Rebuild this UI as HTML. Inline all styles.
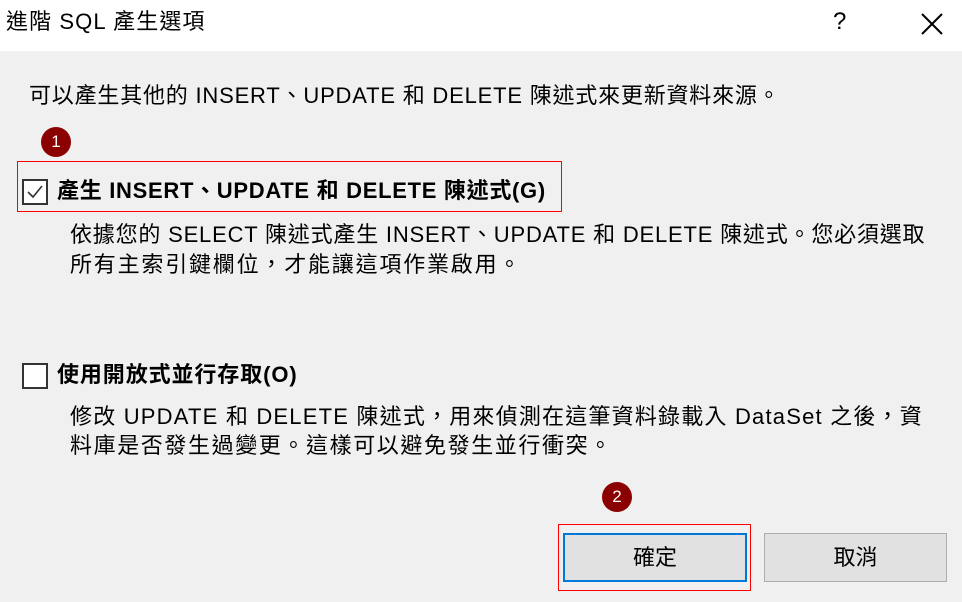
<!DOCTYPE html>
<html><head><meta charset="utf-8"><style>
body{margin:0;width:962px;height:602px;background:#f0f0f0;position:relative;overflow:hidden;font-family:"Liberation Sans","Noto Sans CJK TC",sans-serif;color:#000;font-size:22px}
.t{position:absolute;white-space:nowrap;line-height:30px;letter-spacing:0.8px}
.bar{position:absolute;left:0;top:0;width:962px;height:51px;background:#fff}
.cb{position:absolute;width:22px;height:22px;border:2px solid #333;background:#fff}
.red{position:absolute;border:1px solid #ff0000}
.circ{position:absolute;width:30px;height:30px;border-radius:50%;background:#8b0000;color:#fff;font-size:17px;text-align:center;line-height:30px}
.btn{position:absolute;box-sizing:border-box;background:#e1e1e1;text-align:center;font-size:22px}
</style></head><body>
<div class="bar"></div>
<div class="t" style="left:6px;top:7px;letter-spacing:1.1px">進階 SQL 產生選項</div>
<div class="t" style="left:833px;top:7px;font-size:24px">?</div>
<svg style="position:absolute;left:921px;top:13px" width="22" height="22"><path d="M1 1L21 21M21 1L1 21" stroke="#000" stroke-width="2"/></svg>
<div class="t" style="left:29px;top:81px">可以產生其他的 INSERT、UPDATE 和 DELETE 陳述式來更新資料來源。</div>
<div class="circ" style="left:41px;top:127px">1</div>
<svg style="position:absolute;left:17px;top:161px" width="545" height="51"><rect x="0.5" y="0.5" width="544" height="50" fill="none" stroke="#ff0000" stroke-width="1"/></svg>
<div class="cb" style="left:22px;top:179px"></div>
<svg style="position:absolute;left:24px;top:181px" width="22" height="22"><path d="M4 11L9 16L18 5" stroke="#333" stroke-width="1.6" fill="none"/></svg>
<div class="t" style="left:57px;top:176px;font-weight:bold;letter-spacing:0.7px">產生 INSERT、UPDATE 和 DELETE 陳述式(G)</div>
<div class="t" style="left:70px;top:220px">依據您的 SELECT 陳述式產生 INSERT、UPDATE 和 DELETE 陳述式。您必須選取</div>
<div class="t" style="left:70px;top:250px;letter-spacing:1.8px">所有主索引鍵欄位，才能讓這項作業啟用。</div>
<div class="cb" style="left:22px;top:363px"></div>
<div class="t" style="left:57px;top:360px;font-weight:bold;letter-spacing:0.9px">使用開放式並行存取(O)</div>
<div class="t" style="left:70px;top:402px;letter-spacing:1.2px">修改 UPDATE 和 DELETE 陳述式，用來偵測在這筆資料錄載入 DataSet 之後，資</div>
<div class="t" style="left:70px;top:431px;letter-spacing:1.6px">料庫是否發生過變更。這樣可以避免發生並行衝突。</div>
<div class="circ" style="left:602px;top:482px">2</div>
<div class="red" style="left:558px;top:524px;width:191px;height:65px"></div>
<div class="btn" style="left:563px;top:533px;width:184px;height:49px;border:2px solid #0078d7;line-height:45px">確定</div>
<div class="btn" style="left:764px;top:533px;width:183px;height:49px;border:1px solid #adadad;line-height:47px">取消</div>
</body></html>
